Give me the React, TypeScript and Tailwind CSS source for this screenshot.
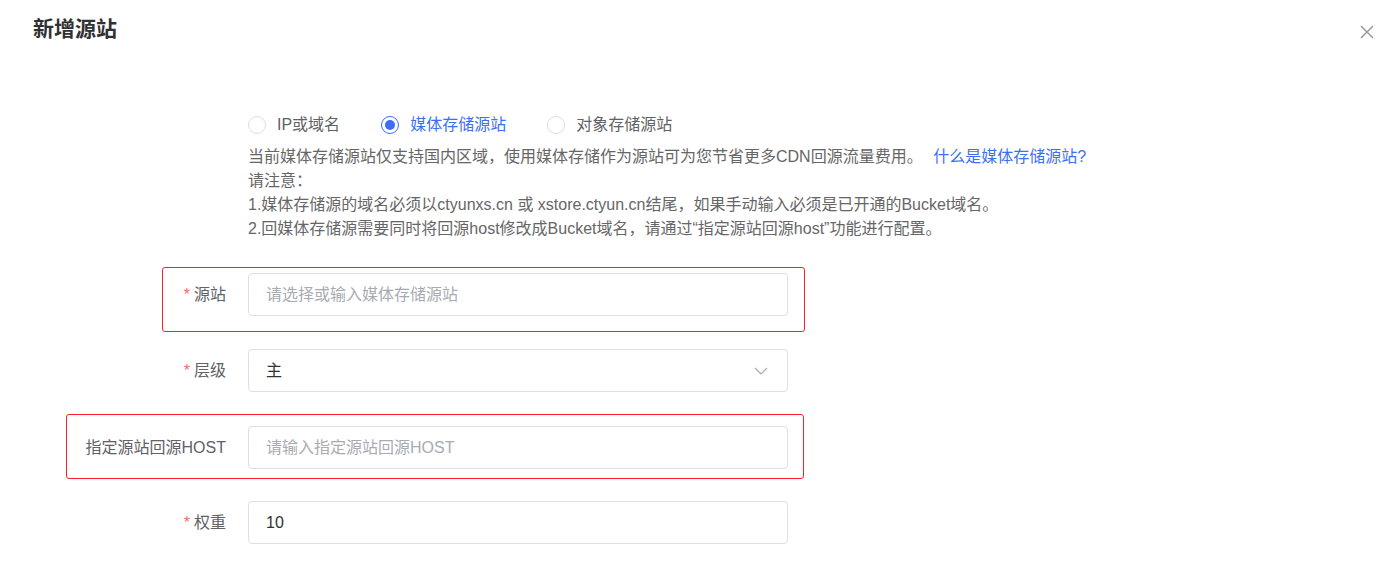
import { useState } from "react";

const font = "font-['Liberation_Sans','Noto_Sans_CJK_SC',sans-serif]";

function Radio({
  label,
  checked,
  onClick,
}: {
  label: string;
  checked: boolean;
  onClick: () => void;
}) {
  return (
    <label onClick={onClick} className="flex items-center cursor-pointer">
      <span
        className={`flex items-center justify-center w-[18px] h-[18px] rounded-full border ${
          checked ? "border-[#3d6ff5]" : "border-[#dcdfe6]"
        }`}
      >
        {checked && <span className="w-[10px] h-[10px] rounded-full bg-[#3d6ff5]" />}
      </span>
      <span
        className={`ml-[11px] text-[16px] ${checked ? "text-[#3d6ff5]" : "text-[#606266]"}`}
      >
        {label}
      </span>
    </label>
  );
}

function FormRow({
  label,
  required,
  highlight,
  children,
}: {
  label: string;
  required?: boolean;
  highlight?: string;
  children: React.ReactNode;
}) {
  return (
    <div className="relative flex items-center h-[43px]">
      {highlight && (
        <div
          className={`absolute h-[65px] border border-[#f5222d] rounded-[3px] pointer-events-none ${highlight}`}
        />
      )}
      <div className="w-[248px] pr-[22px] text-right text-[16px] text-[#606266]">
        {required && <span className="text-[#f56c6c] mr-[4px]">*</span>}
        {label}
      </div>
      {children}
    </div>
  );
}

export default function App() {
  const [type, setType] = useState("media");

  return (
    <div className={`w-[1378px] h-[574px] bg-white overflow-hidden ${font}`}>
      <div className="flex items-center justify-between pl-[33px] pr-0 pt-[15px]">
        <h2 className="text-[21px] font-bold text-[#303133] leading-[28px]">新增源站</h2>
        <button className="w-[19px] h-[20px] flex items-center justify-start text-[#909399] mt-[5px]">
          <svg width="16" height="16" viewBox="0 0 16 16" fill="none" stroke="currentColor" strokeWidth="1.4">
            <path d="M2 2l12 12M14 2L2 14" />
          </svg>
        </button>
      </div>

      <div className="pl-[248px] mt-[70px]">
        <div className="flex items-center h-[24px]">
          <Radio label="IP或域名" checked={type === "ip"} onClick={() => setType("ip")} />
          <div className="w-[41px]" />
          <Radio label="媒体存储源站" checked={type === "media"} onClick={() => setType("media")} />
          <div className="w-[41px]" />
          <Radio label="对象存储源站" checked={type === "oss"} onClick={() => setType("oss")} />
        </div>
        <div className="mt-[8px] text-[16px] leading-[24px] text-[#666666]">
          <p>
            当前媒体存储源站仅支持国内区域，使用媒体存储作为源站可为您节省更多CDN回源流量费用。{" "}
            <a className="text-[#3d6ff5] ml-[6px] cursor-pointer">什么是媒体存储源站?</a>
          </p>
          <p>请注意：</p>
          <p>1.媒体存储源的域名必须以ctyunxs.cn 或 xstore.ctyun.cn结尾，如果手动输入必须是已开通的Bucket域名。</p>
          <p>2.回媒体存储源需要同时将回源host修改成Bucket域名，请通过“指定源站回源host”功能进行配置。</p>
        </div>
      </div>

      <div className="mt-[32px]">
        <FormRow label="源站" required highlight="top-[-6px] left-[162px] w-[643px]">
          <input
            placeholder="请选择或输入媒体存储源站"
            className="w-[540px] h-[43px] px-[17px] border border-[#dcdfe6] rounded-[4px] text-[16px] text-[#303133] placeholder:text-[#a8abb2] outline-none"
          />
        </FormRow>

        <div className="mt-[33px]">
          <FormRow label="层级" required>
            <div className="w-[540px] h-[43px] pl-[17px] pr-[18px] border border-[#dcdfe6] rounded-[4px] flex items-center justify-between text-[16px] text-[#303133]">
              <span>主</span>
              <svg width="16" height="16" viewBox="0 0 16 16" fill="none" stroke="#a8abb2" strokeWidth="1.2">
                <path d="M2 5l6 6 6-6" />
              </svg>
            </div>
          </FormRow>
        </div>

        <div className="mt-[34px]">
          <FormRow label="指定源站回源HOST" highlight="top-[-12px] left-[66px] w-[738px]">
            <input
              placeholder="请输入指定源站回源HOST"
              className="w-[540px] h-[43px] px-[17px] border border-[#dcdfe6] rounded-[4px] text-[16px] text-[#303133] placeholder:text-[#a8abb2] outline-none"
            />
          </FormRow>
        </div>

        <div className="mt-[32px]">
          <FormRow label="权重" required>
            <input
              defaultValue="10"
              className="w-[540px] h-[43px] px-[17px] border border-[#dcdfe6] rounded-[4px] text-[16px] text-[#303133] outline-none"
            />
          </FormRow>
        </div>
      </div>
    </div>
  );
}
